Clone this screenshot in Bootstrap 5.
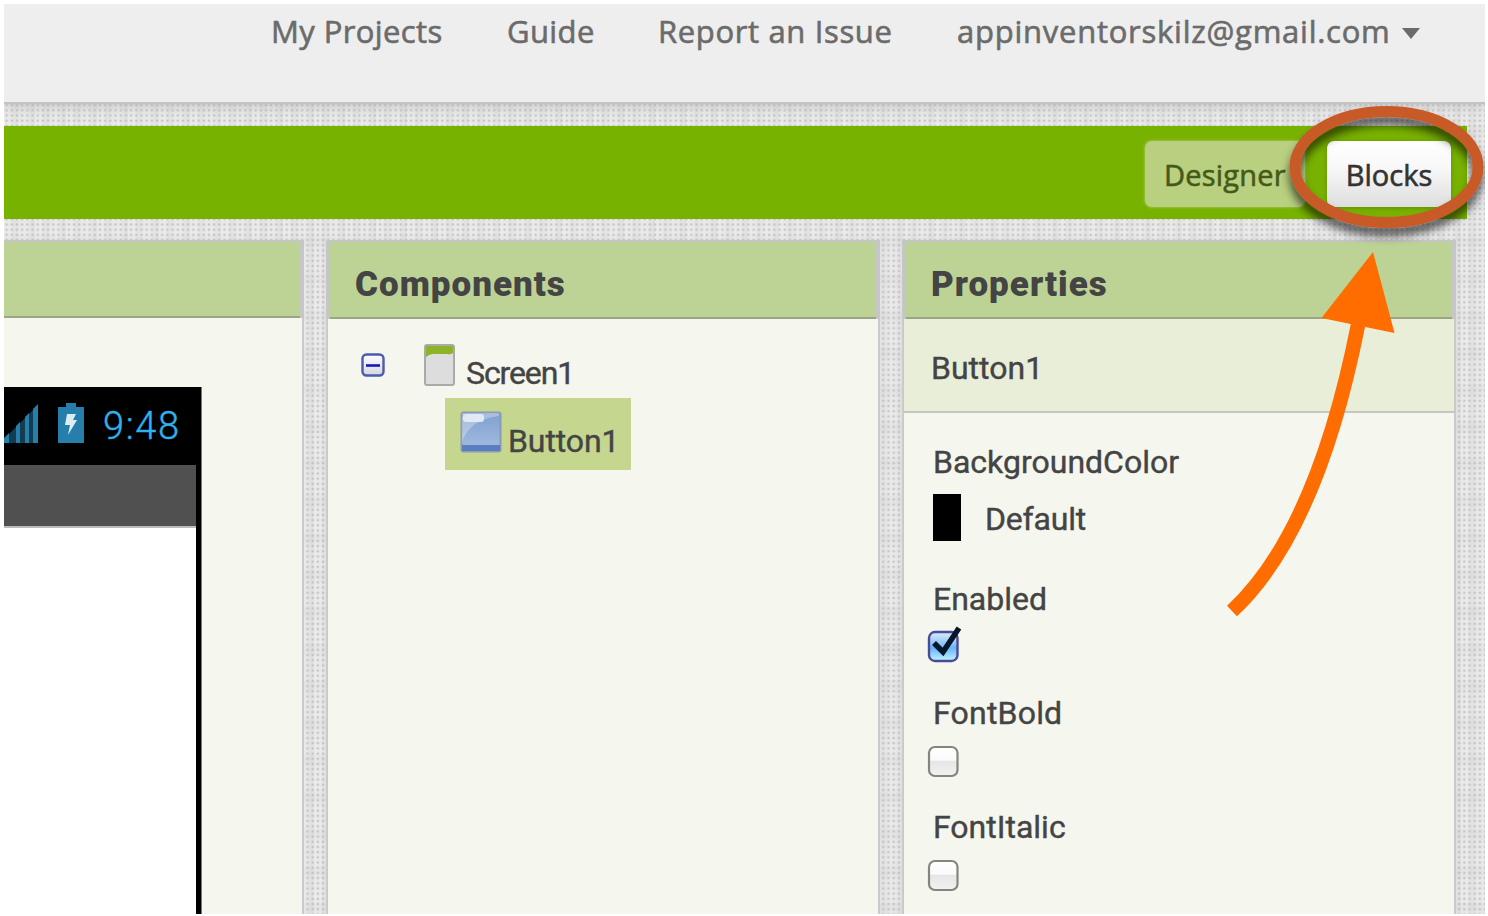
<!DOCTYPE html>
<html lang="en">
<head>
<meta charset="utf-8">
<title>App Inventor</title>
<link href="https://cdn.jsdelivr.net/npm/bootstrap@5.3.0/dist/css/bootstrap.min.css" rel="stylesheet">
<style>
body{width:1488px;height:916px;padding:4px 3px 2px 4px;background:#fff;font-family:Roboto,sans-serif;color:#444;font-size:32px;line-height:38px;overflow:hidden}
.workspace{height:910px;background-color:#e2e2e2;
 background-image:radial-gradient(circle,#b4b4b4dd 0,#c0c0c0aa 1px,transparent 1.7px),repeating-linear-gradient(90deg,#f4f4f444 0 7px,#d8d8d844 9px 12px,#f4f4f433 17px 23px,#d4d4d444 27px 31px),repeating-linear-gradient(#f4f4f444 0 9px,#d8d8d833 13px 19px,#f4f4f433 24px 37px);
 background-size:5.2px 5.2px,100% 100%,100% 100%}
.topbar{height:98px;background:#eee;color:#6b6b6b;font-family:"Open Sans",sans-serif;padding:7px 65px 0 267px;font-size:31px;line-height:40px;box-shadow:0 2px 1px #c3c3c3,0 4px 10px #aaa8;clip-path:inset(0 0 -20px 0);white-space:nowrap}
.topbar a{color:inherit;text-decoration:none;-webkit-text-stroke:.6px;letter-spacing:.4px}
.caret{width:18px;height:11px}
.greenbar{height:93px;margin:24px 18px 0 0;background:#78b200;padding:15px 16px 0 0;gap:22px;font-family:"Open Sans",sans-serif}
.toggle{height:66px;border:0;border-radius:7px;padding:0;font-size:29px;line-height:67px;-webkit-text-stroke:.6px}
.t-designer{width:160px;background:#b8d080;color:#465a18;text-align:left;padding-left:19px;box-shadow:0 0 3px #b8d080;letter-spacing:.2px}
.t-blocks{width:124px;background:linear-gradient(#fff,#f8f8f8 40%,#dedede);color:#333;box-shadow:0 1px 4px #4d750099}
.panels{margin-top:21px;height:674px;gap:22px}
.pane{width:554px;display:flex;flex-direction:column;flex-shrink:0}
.pane-first{width:300px}
.pane-title{height:79px;background:#bdd395;border:solid #c6c6c6;border-width:2px 4px 0;font-weight:900;font-size:35px;letter-spacing:1px;line-height:40px;padding:23px 0 0 25px;box-shadow:inset 0 -2px #9ca487}
.pane-first .pane-title{border-left:0}
.pane-body{flex:1;background:#f5f6ed;border:solid #cacaca;border-width:0 2px;-webkit-text-stroke:.4px}
.pane-first .pane-body{border-left:0;padding-top:69px}
.phone{width:197px;height:527px;background:#fff;border-right:5px solid #000;box-shadow:1px 0 #777}
.status{height:78px;width:197px;background:#000;color:#2fb1ea;font-size:38px;font-weight:300;line-height:78px;letter-spacing:1.6px}
.titlebar{height:63px;background:#505050;border-bottom:2px solid #bbb}
.tree{padding:25px 0 0 33px}
.node-sel{height:72px;width:186px;margin-left:84px;background:#c5d78f;padding-left:15px}
.cname{height:94px;background:#e8eed7;border-bottom:2px solid #c6c8c0;padding:30px 0 0 27px}
.props{padding:30px 0 0 29px}
.props svg{display:block}
.overlay{left:0;top:0;pointer-events:none}
span{white-space:nowrap}
</style>
</head>
<body>
<div class="workspace">
  <nav class="topbar d-flex">
    <a href="#" style="width:236px">My Projects</a>
    <a href="#" style="width:151px">Guide</a>
    <a href="#" style="width:299px;letter-spacing:.65px">Report an Issue</a>
    <a href="#" style="width:445px;letter-spacing:.75px">appinventorskilz@gmail.com</a>
    <svg class="caret flex-shrink-0" style="margin-top:17px" viewBox="0 0 18 11"><path d="M0 0H18L9 11Z" fill="#6b6b6b"/></svg>
  </nav>
  <div class="greenbar d-flex justify-content-end">
    <button class="toggle t-designer"><span>Designer</span></button>
    <button class="toggle t-blocks"><span>Blocks</span></button>
  </div>
  <main class="panels d-flex">
    <section class="pane pane-first">
      <div class="pane-title"></div>
      <div class="pane-body">
        <div class="phone">
          <div class="status d-flex">
            <svg width="99" height="78" viewBox="4 388 99 78" class="flex-shrink-0">
              <path d="M4 440 38 406V444H4Z" fill="#123c52"/>
              <path d="M4 439 9 434V444H4ZM16 427 20 423V444H16ZM25 418 29 414V444H25ZM33 410 38 405V444H33Z" fill="#267eaa"/>
              <path d="M58 408H66V404H76V408H84V444H58Z" fill="#267eaa"/>
              <path d="M67 415H76L73 421H77L68 436L70 426H65Z" fill="#dcecf3"/>
            </svg>
            <span>9:48</span>
          </div>
          <div class="titlebar"></div>
        </div>
      </div>
    </section>
    <section class="pane">
      <div class="pane-title"><span>Components</span></div>
      <div class="pane-body tree">
        <div class="d-flex align-items-start">
          <svg width="24" height="24" viewBox="0 0 24 24" style="margin-top:9px"><defs><linearGradient id="g0" x2="0" y2="1"><stop stop-color="#fff"/><stop offset="1" stop-color="#d5d5df"/></linearGradient></defs><rect x="1.5" y="1.5" width="21" height="21" rx="4" fill="url(#g0)" stroke="#4c5bab" stroke-width="2.4"/><path d="M5 12.5H19" stroke="#1717bd" stroke-width="2.6"/></svg>
          <svg width="31" height="42" viewBox="0 0 31 42" style="margin-left:39px"><rect x="1" y="1" width="29" height="40" rx="2" fill="#ddd" stroke="#aaa" stroke-width="2"/><path d="M2 2H29V9Q27 11 23 10H8Q4 11 2 13Z" fill="#8db329"/></svg>
          <span style="margin:10px 0 0 11px;letter-spacing:-1.1px">Screen1</span>
        </div>
        <div class="node-sel d-flex" style="margin-top:6px">
          <svg width="42" height="42" viewBox="0 0 42 42" style="margin-top:13px"><defs><linearGradient id="g1" x2="0" y2="1"><stop stop-color="#7fa0cf"/><stop offset="1" stop-color="#a5bde0"/></linearGradient></defs><rect x="1.5" y="1.5" width="39" height="39" rx="2" fill="url(#g1)" stroke="#8b9ab5" stroke-width="2"/><path d="M2 32Q8 9 39 5V2H2Z" fill="#fff" opacity=".3"/><path d="M2 34H40V40H2Z" fill="#5b7fbe"/><rect x="3" y="3" width="21" height="8" rx="3" fill="#e0e9f5"/></svg>
          <span style="margin:24px 0 0 6px;letter-spacing:-.1px">Button1</span>
        </div>
      </div>
    </section>
    <section class="pane">
      <div class="pane-title"><span>Properties</span></div>
      <div class="pane-body">
        <div class="cname"><span>Button1</span></div>
        <div class="props">
          <span class="d-block">BackgroundColor</span>
          <div class="d-flex" style="margin-top:13px"><div style="width:28px;height:47px;background:#000"></div><span style="margin:6px 0 0 24px;letter-spacing:-.2px">Default</span></div>
          <span class="d-block" style="margin-top:39px">Enabled</span>
          <svg width="36" height="38" viewBox="926 626 36 38" style="margin:8px 0 0 -7px"><defs><linearGradient id="g2" x2="0" y2="1"><stop stop-color="#d9edfd"/><stop offset=".45" stop-color="#89bff5"/><stop offset=".55" stop-color="#65b3f8"/><stop offset="1" stop-color="#c3f6ff"/></linearGradient><linearGradient id="g3" x2="0" y2="1"><stop stop-color="#fff"/><stop offset=".45" stop-color="#fafafa"/><stop offset=".5" stop-color="#e6e6e6"/><stop offset="1" stop-color="#f2f2f2"/></linearGradient></defs><rect x="929" y="632" width="28.500" height="29" rx="6" fill="url(#g2)" stroke="#4a4a96" stroke-width="2.4"/><path d="M934 643 943 652 959 628" fill="none" stroke="#06162b" stroke-width="5.500"/></svg>
          <span class="d-block" style="margin-top:30px;letter-spacing:.2px">FontBold</span>
          <svg width="36" height="38" viewBox="926 626 36 38" style="margin:9px 0 0 -7px"><rect x="929" y="632" width="28.500" height="29" rx="6" fill="url(#g3)" stroke="#85857e" stroke-width="2.2"/></svg>
          <span class="d-block" style="margin-top:29px">FontItalic</span>
          <svg width="36" height="38" viewBox="926 626 36 38" style="margin:9px 0 0 -7px"><rect x="929" y="632" width="28.500" height="29" rx="6" fill="url(#g3)" stroke="#85857e" stroke-width="2.2"/></svg>
        </div>
      </div>
    </section>
  </main>
</div>
<svg class="overlay position-absolute" width="1485" height="914" viewBox="0 0 1485 914">
  <defs><filter id="sh" x="-20%" y="-20%" width="140%" height="150%"><feDropShadow dx="0" dy="8" stdDeviation="5" flood-color="#000" flood-opacity=".65"/></filter></defs>
  <ellipse cx="1386.500" cy="167" rx="91.500" ry="55.500" fill="none" stroke="#c75a28" stroke-width="11" filter="url(#sh)"/>
  <path d="M1232 611Q1317 532 1358 325" fill="none" stroke="#ff6c00" stroke-width="14.500"/>
  <path d="M1373 252 1394.500 333 1321.500 318Z" fill="#ff6c00"/>
</svg>
<script src="https://cdn.jsdelivr.net/npm/bootstrap@5.3.0/dist/js/bootstrap.bundle.min.js"></script>
</body>
</html>
